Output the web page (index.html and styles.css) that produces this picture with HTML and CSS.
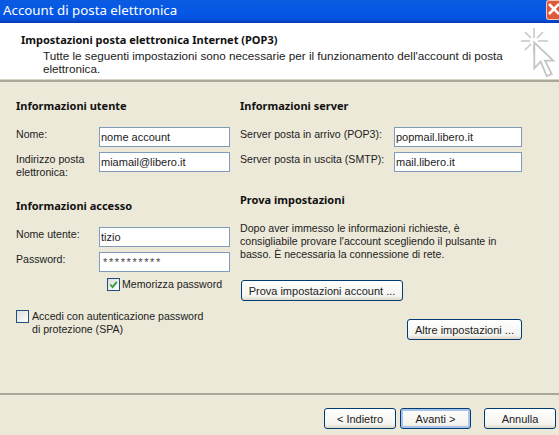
FILE: index.html
```html
<!DOCTYPE html>
<html lang="it">
<head>
<meta charset="utf-8">
<title>Account di posta elettronica</title>
<link rel="stylesheet" href="styles.css">
</head>
<body>
<div class="window">
  <header class="titlebar">
    <span class="title">Account di posta elettronica</span>
    <span class="close"><svg viewBox="0 0 13 14" width="13" height="14"><path d="M2 3 L12 13 M12 3 L2 13" stroke="#fff" stroke-width="2.6" fill="none"/></svg></span>
  </header>
  <section class="banner">
    <div class="banner-text">
      <h1>Impostazioni posta elettronica Internet (POP3)</h1>
      <p>Tutte le seguenti impostazioni sono necessarie per il funzionamento dell'account di posta elettronica.</p>
    </div>
    <svg class="wizard-icon" viewBox="0 0 36 50" width="36" height="50">
      <g stroke="#c6c6c6" stroke-width="1.5" fill="none">
        <path d="M13 0 V10 M13 17 V26 M0 13 H9 M17 13 H27 M4 4 L10 10 M22 4 L16 10 M4 22 L10 16"/>
      </g>
      <path d="M13.3 14.7 V40.3 L19.7 33.7 L25.7 48 L30.7 46 L24 32.7 H32.3 Z" fill="#fff" stroke="#c4c4c4" stroke-width="1.8"/>
    </svg>
  </section>
  <main class="content">
    <div class="col col-left">
      <h2>Informazioni utente</h2>
      <div class="row"><label>Nome:</label><input class="field" type="text" value="nome account"></div>
      <div class="row"><label>Indirizzo posta elettronica:</label><input class="field" type="text" value="miamail@libero.it"></div>
      <h2 class="second">Informazioni accesso</h2>
      <div class="row"><label>Nome utente:</label><input class="field" type="text" value="tizio"></div>
      <div class="row"><label>Password:</label><input class="field pw" type="text" value="**********"></div>
      <div class="remember">
        <span class="check"><svg viewBox="0 0 12 12" width="11" height="11"><path d="M2.5 6 L5 8.8 L9.6 3.2" stroke="#2f9e3a" stroke-width="2" fill="none"/></svg></span>
        <span>Memorizza password</span>
      </div>
      <div class="spa">
        <span class="check"></span>
        <span>Accedi con autenticazione password<br>di protezione (SPA)</span>
      </div>
    </div>
    <div class="col col-right">
      <h2>Informazioni server</h2>
      <div class="row"><label>Server posta in arrivo (POP3):</label><input class="field" type="text" value="popmail.libero.it"></div>
      <div class="row"><label>Server posta in uscita (SMTP):</label><input class="field" type="text" value="mail.libero.it"></div>
      <h2 class="test">Prova impostazioni</h2>
      <p class="hint">Dopo aver immesso le informazioni richieste, è consigliabile provare l'account scegliendo il pulsante in basso. È necessaria la connessione di rete.</p>
      <button class="btn btn-test" type="button">Prova impostazioni account ...</button>
      <div class="more"><button class="btn btn-more" type="button">Altre impostazioni ...</button></div>
    </div>
  </main>
  <footer class="footer">
    <button class="btn nav" type="button">&lt; Indietro</button>
    <button class="btn nav primary" type="button">Avanti &gt;</button>
    <button class="btn nav cancel" type="button">Annulla</button>
  </footer>
</div>
</body>
</html>
```
FILE: styles.css
```css
* { box-sizing: border-box; }
html, body { margin: 0; padding: 0; }
body {
  width: 559px;
  height: 435px;
  overflow: hidden;
  font-family: "Liberation Sans", Arial, sans-serif;
  font-size: 10.6px;
  color: #222;
}
.window {
  width: 559px;
  height: 435px;
  background: #ece9d8;
  display: flex;
  flex-direction: column;
}
.titlebar {
  height: 23px;
  flex: none;
  background: linear-gradient(#0a5be0 0%, #0558e6 55%, #0450dc 85%, #0339b0 100%);
  display: flex;
  justify-content: space-between;
  align-items: flex-start;
}
.title {
  color: #fff;
  font-family: "Noto Sans", sans-serif;
  font-size: 13.3px;
  line-height: 20px;
  padding-left: 3px;
}
.close {
  width: 13px;
  height: 20px;
  background: #e0583a;
  border: 1px solid #f4c4b4;
  border-right: 0;
  border-radius: 3px 0 0 3px;
  overflow: hidden;
}
.banner {
  height: 59px;
  flex: none;
  background: #fff;
  border-bottom: 2px solid #aca899;
  box-shadow: inset 0 -1px 0 #d8d5c6;
  position: relative;
  padding: 10px 0 0 21px;
}
.banner-text { width: 490px; }
h1 {
  margin: 0;
  font-family: "Noto Sans", sans-serif;
  font-size: 11px;
  font-weight: 700;
  line-height: 14px;
  color: #111;
}
.banner p {
  margin: 2px 0 0;
  padding-left: 22px;
  font-size: 11.7px;
  line-height: 13px;
}
.wizard-icon {
  position: absolute;
  left: 521px;
  top: 5px;
}
.content {
  flex: 1;
  display: flex;
  padding: 17px 0 0 16px;
}
.col-left { width: 224px; flex: none; }
.col-right { width: 282px; flex: none; }
h2 {
  margin: 0 0 14px;
  font-family: "Noto Sans", sans-serif;
  font-size: 11px;
  font-weight: 700;
  line-height: 14px;
  color: #111;
}
h2.second { margin: 27px 0 14px; }
h2.test { margin: 21px 0 15px; }
.row {
  display: flex;
  height: 20px;
  margin-bottom: 5px;
}
.row label {
  width: 83px;
  flex: none;
  line-height: 13px;
  padding-top: 1px;
}
.col-right .row label { width: 154px; }
.field {
  border: 1px solid #7f9db9;
  background: #fff;
  height: 20px;
  padding: 1px;
  font: inherit;
  font-size: 11px;
  color: #222;
  margin: 0;
  border-radius: 0;
  outline: 0;
}
.field.pw {
  padding-left: 3px;
  letter-spacing: 1.6px;
  color: #444;
}
.col-left .field { width: 131px; }
.col-right .field { width: 128px; }
.remember {
  display: flex;
  gap: 2px;
  align-items: center;
  height: 14px;
  margin: 2px 0 0 91px;
}
.check {
  width: 13px;
  height: 13px;
  flex: none;
  border: 1px solid #1c5180;
  background: linear-gradient(135deg, #dcdcd7, #fff);
  display: block;
}
.check svg { display: block; }
.spa {
  display: flex;
  gap: 3px;
  line-height: 13px;
  margin-top: 19px;
}
.hint {
  margin: 0 0 19px;
  line-height: 13px;
  width: 266px;
}
.btn {
  font: inherit;
  font-size: 11px;
  color: #222;
  background: linear-gradient(#fff, #f4f3ee 80%, #dcd8c8);
  border: 1px solid #003c74;
  border-radius: 3px;
  padding: 0;
  height: 21px;
  margin: 0;
}
.btn-test { width: 162px; margin-left: 1px; display: block; }
.more { display: flex; justify-content: flex-end; width: 282px; margin-top: 18px; }
.btn-more { width: 115px; }
.footer {
  height: 42px;
  flex: none;
  border-top: 2px solid #aca899;
  padding-top: 13px;
  display: flex;
  padding-left: 324px;
}
.nav { width: 72px; height: 21px; }
.primary {
  margin-left: 4px;
  width: 71px;
  box-shadow: inset 0 0 0 2px #a9c4ea;
}
.cancel { margin-left: 13px; }
```
